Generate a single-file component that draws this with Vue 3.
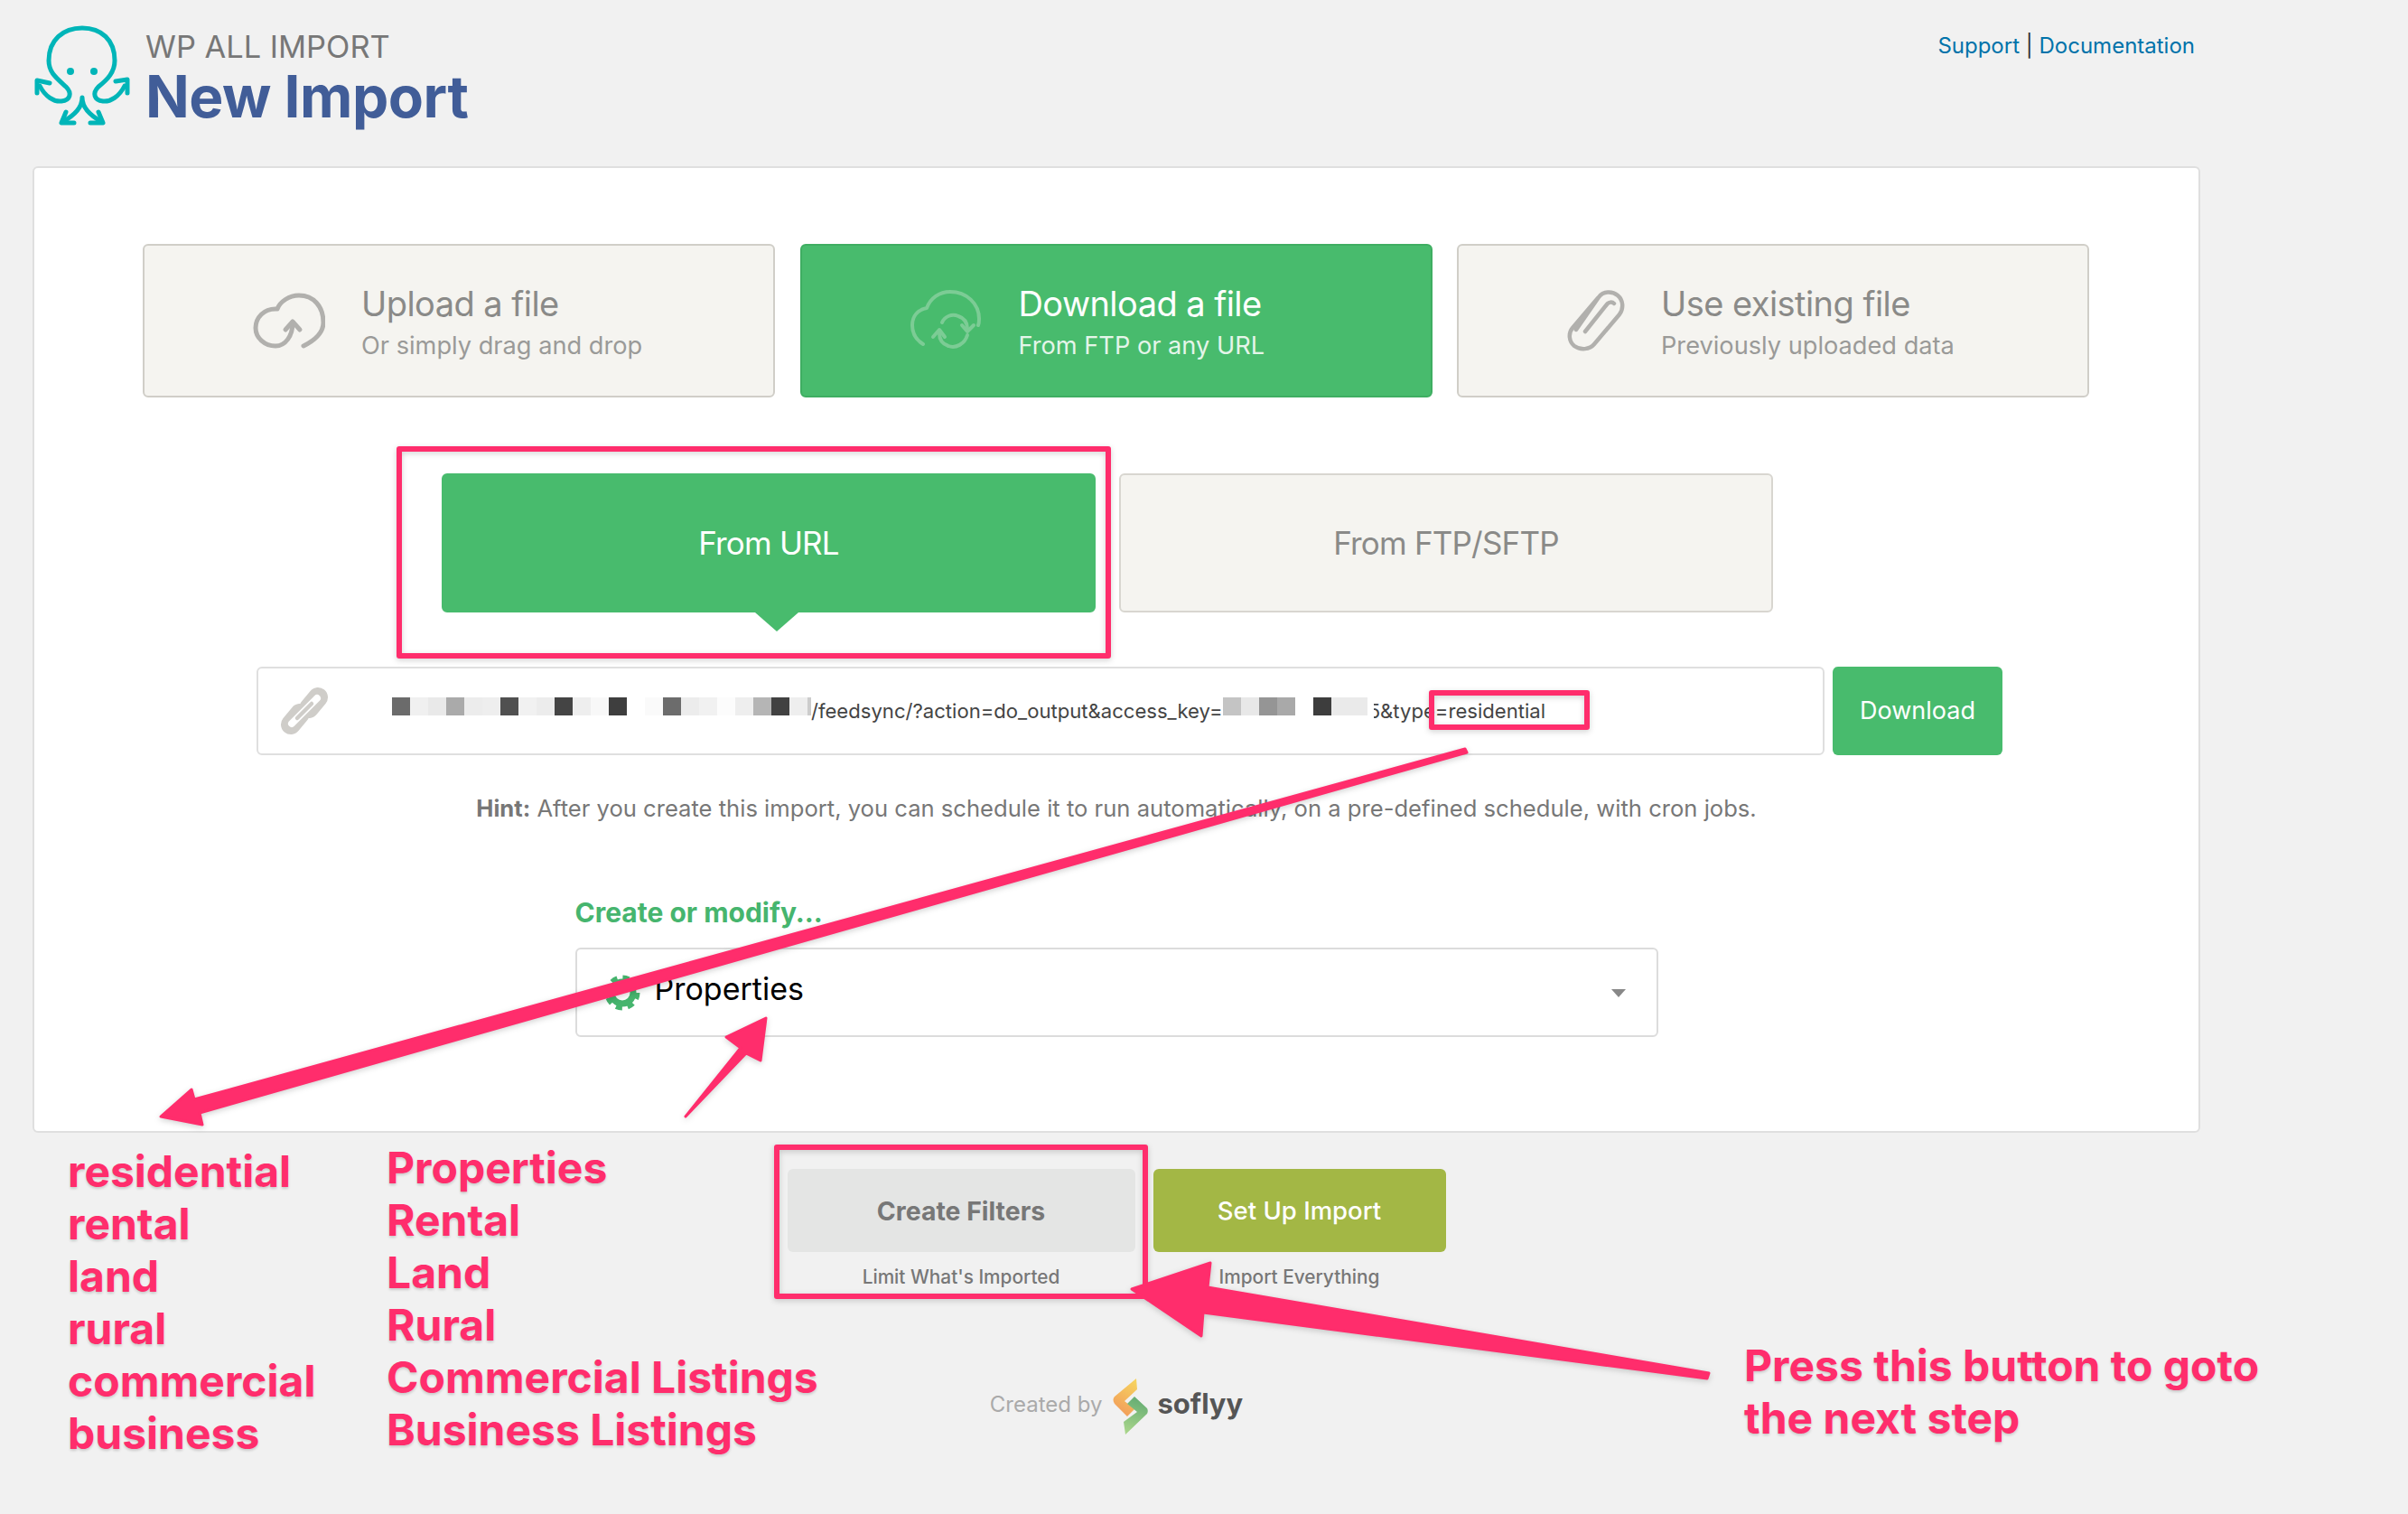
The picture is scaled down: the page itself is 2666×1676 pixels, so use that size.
<script setup>
const firstBlocks = ['#6b6b6b','#f0f0f0','#e9e9e9','#aaaaaa','#ececec','#eeeeee','#505050','#f1f1f1','#ececec','#444444','#eeeeee','#f8f8f8','#3e3e3e','#ffffff','#fafafa','#6c6c6c','#ececec','#f1f1f1','#fcfcfc','#eeeeee','#b5b5b5','#414141','#eeeeee']
const secondBlocks = ['#c4c4c4','#e8e8e8','#959595','#a9a9a9','#ffffff','#3d3d3d','#eaeaea','#eaeaea']
const feedTypes = ['residential','rental','land','rural','commercial','business']
const postTypes = ['Properties','Rental','Land','Rural','Commercial Listings','Business Listings']
</script>

<template>
  <div class="page">
    <div class="wrap">
      <header class="header">
        <svg class="logo" viewBox="36 26 110 114" fill="none" stroke="#00b5b8" stroke-width="5" stroke-linecap="round" stroke-linejoin="round">
          <path d="M44 95C50 107 60 113 68 112C78 111 80 103 73 96C62 86 54 80 54 67C54 44 70 31 91 31C112 31 127 44 127 67C127 80 119 88 109 96C102 103 104 111 114 112C122 113 132 107 138 95"/>
          <path d="M55 92L41 89L41 103M128 90L141 88L141 103"/>
          <path d="M91 108C91 120 82 128 69 135M91 108C91 120 100 128 113 135"/>
          <path d="M73 124L68 136L82 136M109 124L114 136L100 136"/>
          <circle cx="78" cy="79" r="4" fill="#00b5b8" stroke="none"/>
          <circle cx="104" cy="79" r="4" fill="#00b5b8" stroke="none"/>
        </svg>
        <div class="titles">
          <div class="brand">WP ALL IMPORT</div>
          <h1>New Import</h1>
        </div>
        <div class="links"><a>Support</a> | <a>Documentation</a></div>
      </header>

      <main class="card">
        <div class="tiles">
          <div class="tile">
            <div class="tile-icon">
              <svg width="80" height="62" viewBox="0 0 80 62" fill="none" stroke="#b1b0ad" stroke-width="5" stroke-linecap="round" stroke-linejoin="round">
                <path d="M56 59C70 52 78 44 78 33C78 15 67 3 51 3C40 3 30 10 27 18C12 17 3 28 3 39C3 50 13 59 25 59C36 59 44 48 44 33"/>
                <path d="M36 41L44 32L52 41"/>
              </svg>
            </div>
            <div class="tile-text">
              <div class="tile-title">Upload a file</div>
              <div class="tile-sub">Or simply drag and drop</div>
            </div>
          </div>
          <div class="tile active">
            <div class="tile-icon">
              <svg width="80" height="68" viewBox="0 0 80 68" fill="none" stroke="#7ccc95" stroke-width="4" stroke-linecap="round" stroke-linejoin="round">
                <path d="M14 60C6 55 2 47 2 39C2 29 8 22 18 20C22 9 32 2 44 2C62 2 76 15 76 32C76 34 76 37 75 39"/>
                <path d="M35 36C38 29 46 26 53 29C59 31 63 36 63 43"/>
                <path d="M57 39L63 46L70 39"/>
                <path d="M63 50C60 60 50 65 42 62C36 60 32 55 32 48"/>
                <path d="M25 52L32 44L38 52"/>
              </svg>
            </div>
            <div class="tile-text">
              <div class="tile-title">Download a file</div>
              <div class="tile-sub">From FTP or any URL</div>
            </div>
          </div>
          <div class="tile existing">
            <div class="tile-icon">
              <svg width="64" height="68" viewBox="0 0 64 68" fill="none" stroke="#b1b0ad" stroke-width="4.5" stroke-linecap="round" stroke-linejoin="round">
                <path d="M10 44L35 8C40 1 50 1 56 6C62 11 63 20 58 27L30 60C25 66 15 67 8 62C2 57 1 48 6 42L34 9"/>
                <path d="M20 46L44 16C46 13 50 13 52 15"/>
              </svg>
            </div>
            <div class="tile-text">
              <div class="tile-title">Use existing file</div>
              <div class="tile-sub">Previously uploaded data</div>
            </div>
          </div>
        </div>

        <div class="subtabs">
          <div class="subtab on">From URL</div>
          <div class="subtab">From FTP/SFTP</div>
        </div>

        <div class="url-row">
          <div class="url-input">
            <svg class="chain" width="54" height="54" viewBox="0 0 54 54" fill="none" stroke-linecap="round">
              <g stroke="#cfcdc9" stroke-width="22">
                <path d="M12 42L22 30"/>
                <path d="M32 24L42 12"/>
              </g>
              <path d="M13 41L41 13" stroke="#ffffff" stroke-width="8"/>
              <path d="M19 35L35 19" stroke="#cfcdc9" stroke-width="4.5"/>
            </svg>
            <span class="blocks"><i v-for="(c, i) in firstBlocks" :key="i" :style="{ background: c }"></i><i class="sliver"></i></span>
            <span class="url-text">/feedsync/?action=do_output&amp;access_key=</span>
            <span class="blocks cover"><i v-for="(c, i) in secondBlocks" :key="i" :style="{ background: c }"></i></span>
            <span class="url-text tail">5&amp;type=residential</span>
          </div>
          <button class="download">Download</button>
        </div>

        <p class="hint"><b>Hint:</b> After you create this import, you can schedule it to run automatically, on a pre-defined schedule, with cron jobs.</p>

        <div class="modify">
          <div class="modify-label">Create or modify...</div>
          <div class="select">
            <svg width="40" height="42" viewBox="0 0 40 42" fill="none" stroke="#46b56e">
              <circle cx="20" cy="21" r="12" stroke-width="7"/>
              <circle cx="20" cy="21" r="16.5" stroke-width="6" stroke-dasharray="6.9 6.05"/>
            </svg>
            <span class="select-value">Properties</span>
            <span class="caret"></span>
          </div>
        </div>
      </main>

      <div class="actions">
        <div class="action">
          <button class="btn filters">Create Filters</button>
          <div class="caption">Limit What's Imported</div>
        </div>
        <div class="action setup-col">
          <button class="btn setup">Set Up Import</button>
          <div class="caption">Import Everything</div>
        </div>
      </div>

      <footer class="footer">
        <span class="created">Created by</span>
        <svg width="40" height="62" viewBox="0 0 40 62">
          <defs>
            <linearGradient id="sfTop" x1="0.7" y1="0" x2="0.3" y2="1">
              <stop offset="0" stop-color="#f6d25f"/>
              <stop offset="1" stop-color="#f29a5a"/>
            </linearGradient>
            <linearGradient id="sfBottom" x1="0.6" y1="0" x2="0.4" y2="1">
              <stop offset="0" stop-color="#63ab72"/>
              <stop offset="1" stop-color="#a8d58a"/>
            </linearGradient>
          </defs>
          <path d="M26 0L27 12L13 25L24 34L16 42L2 28C0 25 0 22 2 20Z" fill="url(#sfTop)"/>
          <path d="M24 20L38 33C39 35 39 37 38 39L14 62L12 48L27 37L16 28Z" fill="url(#sfBottom)"/>
        </svg>
        <span class="soflyy">soflyy</span>
      </footer>
    </div>

    <svg class="marks" width="2666" height="1676" viewBox="0 0 2666 1676">
      <g fill="none" stroke="#ff2d6c" stroke-width="6" stroke-linejoin="round">
        <rect x="442" y="497" width="785" height="229"/>
        <rect x="1585" y="767" width="172" height="38"/>
        <rect x="860" y="1270" width="408" height="165"/>
      </g>
      <g fill="#ff2d6c" stroke="#ff2d6c" stroke-width="3" stroke-linejoin="round">
        <path d="M1622 829L1624 833L221 1232L224 1245L178 1236L212 1206L215 1217Z"/>
        <path d="M759 1236L820 1160L804 1148L848 1127L842 1174L826 1166Z"/>
        <path d="M1892 1520L1890 1526L1332 1453L1330 1479L1253 1427L1340 1398L1337 1425Z"/>
      </g>
    </svg>

    <div class="note col-a"><div v-for="t in feedTypes" :key="t">{{ t }}</div></div>
    <div class="note col-b"><div v-for="t in postTypes" :key="t">{{ t }}</div></div>
    <div class="note col-c">Press this button to goto<br>the next step</div>
  </div>
</template>

<style>
html, body { margin: 0; background: #f1f1f1; }
</style>

<style scoped>
.page {
  position: relative;
  width: 2666px;
  height: 1676px;
  overflow: hidden;
  background: #f1f1f1;
  font-family: Inter, "Liberation Sans", sans-serif;
}

.wrap {
  margin-left: 36px;
  width: 2400px;
}

.header {
  position: relative;
  display: flex;
  height: 184px;
  box-sizing: border-box;
}

.logo {
  width: 110px;
  height: 114px;
  margin: 26px 0 0 0;
  flex: none;
}

.titles {
  margin: 32px 0 0 15px;
}

.brand {
  font-size: 34.4px;
  line-height: 40px;
  color: #777;
}

h1 {
  margin: 0;
  font-size: 64px;
  line-height: 70px;
  font-weight: 700;
  color: #415d98;
  letter-spacing: -0.5px;
}

.links {
  margin: 36px 6px 0 auto;
  font-size: 24px;
  line-height: 30px;
  color: #333;
}

.links a {
  color: #0073aa;
}

.card {
  box-sizing: border-box;
  height: 1070px;
  padding-top: 84px;
  background: #fff;
  border: 2px solid #dfdfdf;
  border-radius: 6px;
}

.tiles {
  display: flex;
  gap: 27.5px;
  margin-left: 120px;
}

.tile {
  box-sizing: border-box;
  display: flex;
  align-items: center;
  width: 700px;
  height: 170px;
  background: #f5f4f0;
  border: 2px solid #d0cec8;
  border-radius: 6px;
  color: #8a8a88;
}

.tile-icon {
  display: flex;
  flex: none;
  width: 240px;
  padding-left: 120px;
  box-sizing: border-box;
}

.existing .tile-icon {
  width: 224px;
}

.tile-text {
  padding-top: 4px;
}

.tile-title {
  font-size: 38px;
  line-height: 44px;
  letter-spacing: -0.55px;
}

.tile-sub {
  margin-top: 8px;
  font-size: 27.2px;
  line-height: 34px;
  color: #9a9a98;
}

.tile.active {
  background: #48bb6d;
  border-color: #3fae62;
  color: #fff;
}

.tile.active .tile-sub {
  color: #e4f5e9;
}

.subtabs {
  display: flex;
  gap: 26px;
  margin: 84px 0 0 451px;
}

.subtab {
  position: relative;
  width: 724px;
  height: 154px;
  box-sizing: border-box;
  display: flex;
  align-items: center;
  justify-content: center;
  background: #f5f4f0;
  border: 2px solid #d8d6d0;
  border-radius: 6px;
  font-size: 35px;
  letter-spacing: -0.8px;
  color: #8a8a88;
}

.subtab.on {
  background: #48bb6d;
  border-color: #48bb6d;
  color: #fff;
}

.subtab.on::after {
  content: "";
  position: absolute;
  left: 345px;
  top: 152px;
  border-left: 24px solid transparent;
  border-right: 24px solid transparent;
  border-top: 21px solid #48bb6d;
}

.url-row {
  display: flex;
  gap: 9px;
  margin: 60px 0 0 246px;
}

.url-input {
  box-sizing: border-box;
  display: flex;
  align-items: center;
  width: 1736px;
  height: 98px;
  padding-left: 24px;
  border: 2px solid #dfdfdf;
  border-radius: 6px;
}

.chain {
  flex: none;
  margin-right: 70px;
}

.blocks {
  position: relative;
  z-index: 1;
  display: flex;
  margin-bottom: 10px;
}

.blocks i {
  display: block;
  width: 20px;
  height: 20px;
}

.blocks i.sliver {
  width: 4px;
  background: #cccccc;
}

.blocks.cover::after {
  content: "";
  position: absolute;
  left: 100%;
  top: 0;
  width: 7px;
  height: 30px;
  background: #fff;
}

.url-text {
  font-size: 22.1px;
  white-space: nowrap;
  color: #444;
}

.url-text.tail {
  margin-left: 1px;
}

.download {
  width: 188px;
  height: 98px;
  padding: 0 0 2px;
  border: 0;
  border-radius: 6px;
  background: #48bb6d;
  color: #fff;
  font: 27px Inter, "Liberation Sans", sans-serif;
}

.hint {
  margin: 39px 0 0;
  text-align: center;
  font-size: 25.6px;
  line-height: 40px;
  color: #777;
}

.modify {
  width: 1199px;
  margin: 75px auto 0;
}

.modify-label {
  font-size: 30px;
  line-height: 40px;
  font-weight: 700;
  color: #46b56e;
}

.select {
  box-sizing: border-box;
  display: flex;
  align-items: center;
  height: 99px;
  margin-top: 19px;
  padding-left: 30px;
  border: 2px solid #dcdcdc;
  border-radius: 6px;
}

.select-value {
  margin: 0 0 8px 16px;
  font-size: 34px;
  color: #000;
}

.caret {
  margin: 2px 34px 0 auto;
  border-left: 8px solid transparent;
  border-right: 8px solid transparent;
  border-top: 9px solid #888;
}

.actions {
  display: flex;
  justify-content: center;
  gap: 20px;
  margin-top: 40px;
}

.action {
  text-align: center;
}

.btn {
  display: block;
  height: 92px;
  padding: 0;
  border: 0;
  border-radius: 6px;
  font: 27.5px Inter, "Liberation Sans", sans-serif;
}

.filters {
  width: 385px;
  background: #e4e5e4;
  color: #777;
  font-size: 28.4px;
  font-weight: 700;
}

.setup {
  width: 324px;
  background: #a3b745;
  color: #fff;
  font-weight: 500;
}

.caption {
  margin-top: 14px;
  font-size: 20.8px;
  line-height: 28px;
  font-weight: 500;
  color: #777;
}

.footer {
  display: flex;
  justify-content: center;
  align-items: center;
  margin-top: 98px;
  height: 62px;
}

.created {
  margin: 0 12px 6px 0;
  font-size: 24px;
  color: #aaa;
}

.soflyy {
  margin: 0 0 7px 9px;
  font-size: 31px;
  font-weight: 700;
  color: #555;
}

.marks {
  position: absolute;
  left: 0;
  top: 0;
  pointer-events: none;
  filter: drop-shadow(0 2px 3px rgba(0, 0, 0, 0.18));
}

.note {
  position: absolute;
  font-size: 48px;
  line-height: 58px;
  font-weight: 700;
  color: #ff2d6c;
  text-shadow: 0 2px 3px rgba(0, 0, 0, 0.16);
}

.col-a { left: 75px; top: 1268px; }
.col-b { left: 428px; top: 1264px; }
.col-c { left: 1931px; top: 1483px; white-space: nowrap; }
</style>
